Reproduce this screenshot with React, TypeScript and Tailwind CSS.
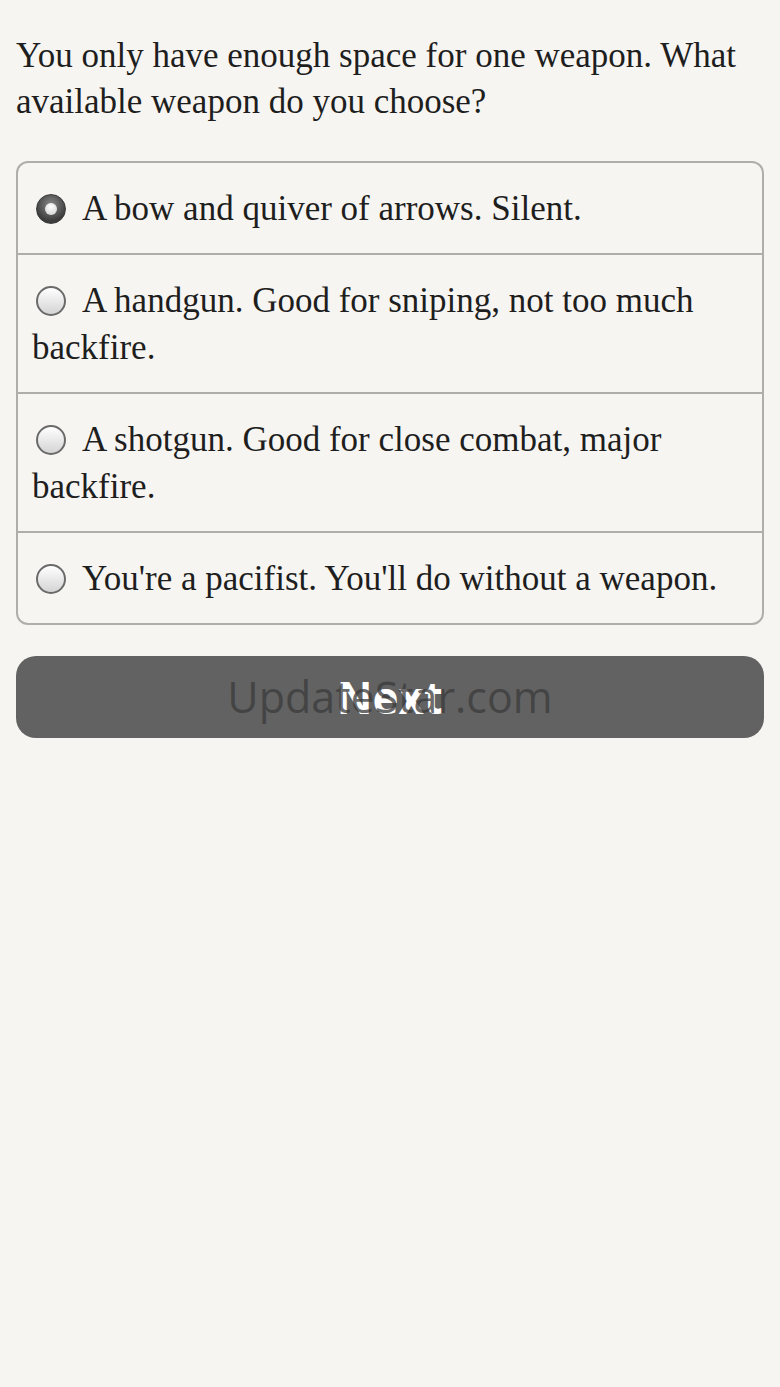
import { useState } from 'react';

const options = [
    'A bow and quiver of arrows. Silent.',
    'A handgun. Good for sniping, not too much backfire.',
    'A shotgun. Good for close combat, major backfire.',
    "You're a pacifist. You'll do without a weapon.",
];

function Radio({ checked }: { checked: boolean }) {
    if (checked) {
        return (
            <span className="inline-block align-[-4px] ml-[4px] mr-[16px] w-[30px] h-[30px] rounded-full border border-[#3a3a3a] bg-[radial-gradient(circle_at_50%_35%,#8a8a8a,#3c3c3c_70%)] relative">
                <span className="absolute left-1/2 top-1/2 -translate-x-1/2 -translate-y-1/2 w-[12px] h-[12px] rounded-full bg-[radial-gradient(circle_at_50%_30%,#ffffff,#cfcfcf)]" />
            </span>
        );
    }
    return (
        <span className="inline-block align-[-4px] ml-[4px] mr-[16px] w-[30px] h-[30px] rounded-full border-2 border-[#6a6a6a] bg-[linear-gradient(180deg,#ffffff,#d4d4d4)]" />
    );
}

export default function App() {
    const [selected, setSelected] = useState(0);

    return (
        <div className="min-h-[1387px] bg-[#f7f5f1] px-[16px] pt-[33px] font-['Liberation_Serif',serif] text-[#1e1e1e]">
            <p className="text-[35px] leading-[46px]">
                You only have enough space for one weapon. What available weapon do you choose?
            </p>

            <div className="mt-[36px] border-2 border-[#b0aeab] rounded-[12px] overflow-hidden">
                {options.map((opt, i) => (
                    <div
                        key={i}
                        onClick={() => setSelected(i)}
                        className={`pl-[14px] pr-[16px] py-[21.5px] text-[35px] leading-[47px] cursor-pointer ${i > 0 ? 'border-t-2 border-[#b0aeab]' : ''}`}
                    >
                        <Radio checked={selected === i} />
                        {opt}
                    </div>
                ))}
            </div>

            <div className="relative mt-[31px]">
                <button className="w-full h-[82px] rounded-[20px] bg-[#626262] text-white text-[44px] font-bold font-['Open_Sans',sans-serif]">
                    Next
                </button>
                <span className="absolute inset-0 flex items-center justify-center pointer-events-none text-[43px] text-[#3a3a3a]/75 font-['Open_Sans',sans-serif]">
                    UpdateStar.com
                </span>
            </div>
        </div>
    );
}
